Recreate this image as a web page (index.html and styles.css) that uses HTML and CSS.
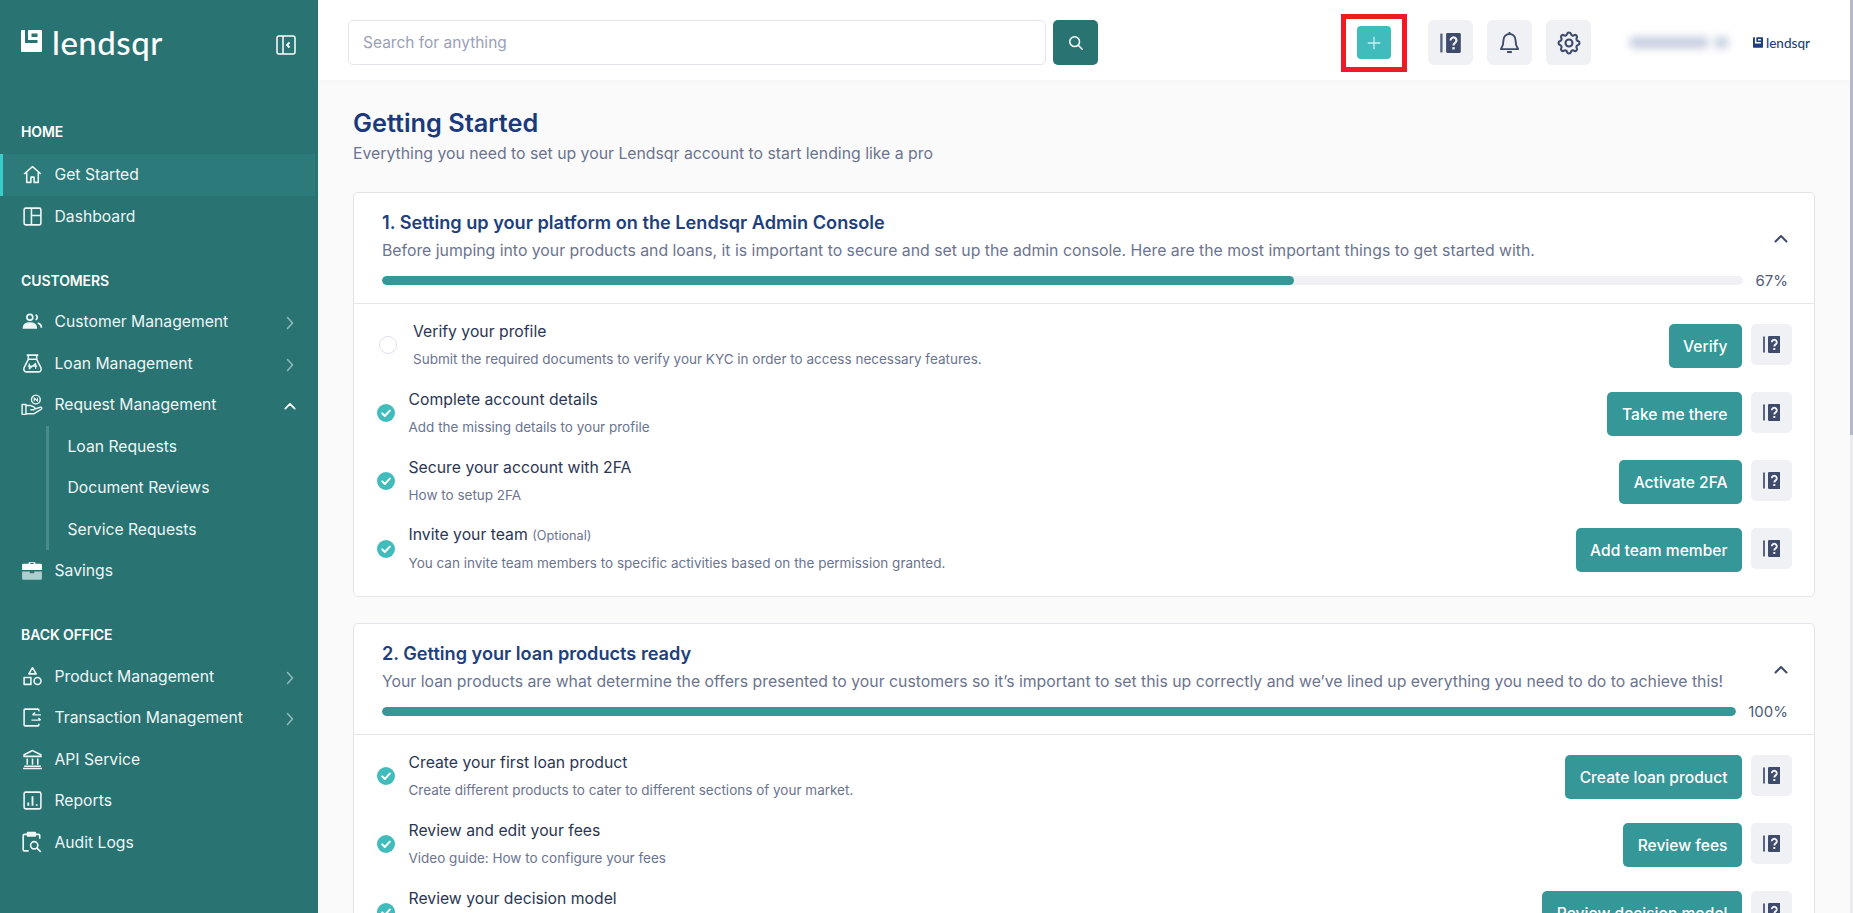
FILE: index.html
```html
<!DOCTYPE html>
<html lang="en">
<head>
    <meta charset="UTF-8">
    <title>Lendsqr - Getting Started</title>
    <link rel="stylesheet" href="styles.css">
</head>
<body>
<svg class="defs" width="0" height="0">
    <symbol id="logo" viewBox="0 0 21 22">
        <path fill="currentColor" fill-rule="evenodd" d="M1 0h3v13h12.500v-3H7V1a1 1 0 0 1 1-1h12a1 1 0 0 1 1 1v20a1 1 0 0 1-1 1H1a1 1 0 0 1-1-1V1a1 1 0 0 1 1-1zM10.500 3.500V7h6V3.500z"/>
    </symbol>
    <symbol id="help" viewBox="0 0 17.500 17">
        <rect x="0" y="0.500" width="2" height="16" fill="currentColor" opacity=".85"/>
        <rect x="5" y="0" width="12.500" height="17" rx="1.200" fill="currentColor"/>
        <path d="M8.800 6.300a2.500 2.500 0 1 1 3.800 2.100c-.9.600-1.300 1-1.300 2.200" fill="none" stroke="#f0f1f4" stroke-width="1.900"/>
        <rect x="10.300" y="12" width="2" height="2" fill="#f0f1f4"/>
    </symbol>
    <symbol id="check" viewBox="0 0 18 18">
        <circle cx="9" cy="9" r="9" fill="#40bcbc"/>
        <path d="M5.200 9.400l2.600 2.600 5-5.400" fill="none" stroke="#fff" stroke-width="2" stroke-linecap="round" stroke-linejoin="round"/>
    </symbol>
    <symbol id="chev-up" viewBox="0 0 14 9">
        <path d="M1.500 7.500L7 2l5.500 5.500" fill="none" stroke="currentColor" stroke-width="2" stroke-linecap="round" stroke-linejoin="round"/>
    </symbol>
    <symbol id="chev-right" viewBox="0 0 8 14">
        <path d="M1.500 1.500L6.500 7l-5 5.500" fill="none" stroke="currentColor" stroke-width="1.600" stroke-linecap="round" stroke-linejoin="round"/>
    </symbol>
</svg>

<div class="app">
    <aside class="sidebar">
        <div class="brand">
            <svg class="brand-mark"><use href="#logo"/></svg>
            <span class="brand-name">lendsqr</span>
            <svg class="collapse" viewBox="0 0 20 20" fill="none" stroke="#fff" stroke-width="1.500"><rect x="1" y="1" width="18" height="18" rx="2"/><path d="M7 1v18"/><path d="M13.500 7.500L11 10l2.500 2.500" stroke-width="1.800"/></svg>
        </div>

        <p class="nav-label first">HOME</p>
        <a class="nav-item current">
            <svg class="nav-icon" viewBox="0 0 20 20" fill="none" stroke="currentColor" stroke-width="1.500" stroke-linejoin="round"><path d="M2 9.500L10 2.500l8 7M4.500 8v9.500h4v-5h3v5h4V8"/></svg>
            <span>Get Started</span>
        </a>
        <a class="nav-item">
            <svg class="nav-icon" viewBox="0 0 20 20" fill="none" stroke="currentColor" stroke-width="1.500"><rect x="2" y="2" width="16" height="16" rx="1.500"/><path d="M9 2v16M9 9h9"/></svg>
            <span>Dashboard</span>
        </a>

        <p class="nav-label">CUSTOMERS</p>
        <a class="nav-item">
            <svg class="nav-icon" viewBox="0 0 20 20" fill="none" stroke="currentColor" stroke-width="1.700"><circle cx="7.500" cy="6" r="2.800"/><path d="M1.500 16c0-3 2.500-4.500 6-4.500s6 1.500 6 4.500z" fill="currentColor"/><path d="M13 3.500a2.800 2.800 0 0 1 0 5M15 11.500c2 .5 3.500 2 3.500 4.500"/></svg>
            <span>Customer Management</span>
            <svg class="nav-chev"><use href="#chev-right"/></svg>
        </a>
        <a class="nav-item">
            <svg class="nav-icon" viewBox="0 0 20 20" fill="none" stroke="currentColor" stroke-width="1.500" stroke-linejoin="round"><path d="M4.500 2h11M6 2v4l-4 8c-.8 2 .3 4 2 4h12c1.700 0 2.800-2 2-4l-4-8V2M6 6h8"/><path d="M5.500 12.500h9M7 10v5l6-5v5" stroke-width="1.200"/></svg>
            <span>Loan Management</span>
            <svg class="nav-chev"><use href="#chev-right"/></svg>
        </a>
        <a class="nav-item">
            <svg class="nav-icon wide" viewBox="0 0 20 20" fill="none" stroke="currentColor" stroke-width="1.300" stroke-linejoin="round"><rect x="1" y="9.500" width="3.500" height="9"/><path d="M4.500 10.500h4.500l3 1.500a1.200 1.200 0 0 1-.5 2.300H8.500M11.500 14l6-2c1.300-.3 2 1.200.8 1.900L11.500 18H4.500"/><circle cx="13.500" cy="5" r="4"/><path d="M12 6.500v-3l3 3v-3" stroke-width="1"/></svg>
            <span>Request Management</span>
            <svg class="nav-chev up"><use href="#chev-up"/></svg>
        </a>
        <div class="subnav">
            <a class="sub-item">Loan Requests</a>
            <a class="sub-item">Document Reviews</a>
            <a class="sub-item">Service Requests</a>
        </div>
        <a class="nav-item">
            <svg class="nav-icon wide" viewBox="0 0 20 20"><path d="M7 3.500V2h6v1.500h5a1 1 0 0 1 1 1V9H1V4.500a1 1 0 0 1 1-1zM8.500 2.800v.8h3v-.8z" fill="#fff"/><path d="M1 10.500h7V12h4v-1.500h7V17a1 1 0 0 1-1 1H2a1 1 0 0 1-1-1z" fill="#a9cfcf"/></svg>
            <span>Savings</span>
        </a>

        <p class="nav-label">BACK OFFICE</p>
        <a class="nav-item">
            <svg class="nav-icon" viewBox="0 0 20 20" fill="none" stroke="currentColor" stroke-width="1.500" stroke-linejoin="round"><path d="M10 1.500l3.500 6h-7z"/><rect x="2" y="11" width="6.500" height="6.500"/><circle cx="14.800" cy="14.300" r="3.300"/></svg>
            <span>Product Management</span>
            <svg class="nav-chev"><use href="#chev-right"/></svg>
        </a>
        <a class="nav-item">
            <svg class="nav-icon" viewBox="0 0 20 20" fill="none" stroke="currentColor" stroke-width="1.500" stroke-linejoin="round"><path d="M16 4V2.800A.800.800 0 0 0 15.200 2H3a1 1 0 0 0-1 1v14a1 1 0 0 0 1 1h12.200a.800.800 0 0 0 .8-.8V16"/><path d="M10 7.500h8M12.500 5.300L10 7.500M9 12.500h8.500M15.500 10.500l2.300 2" stroke-width="1.400"/></svg>
            <span>Transaction Management</span>
            <svg class="nav-chev"><use href="#chev-right"/></svg>
        </a>
        <a class="nav-item">
            <svg class="nav-icon" viewBox="0 0 20 20" fill="none" stroke="currentColor" stroke-width="1.500"><path d="M10 1.500L2 5.500v1.500h16V5.500z"/><path d="M5 9v6M10 9v6M15 9v6M1 18.500h18M2 16.500h16"/></svg>
            <span>API Service</span>
        </a>
        <a class="nav-item">
            <svg class="nav-icon" viewBox="0 0 20 20" fill="none" stroke="currentColor" stroke-width="1.500"><rect x="2" y="2" width="16" height="16" rx="1.500"/><path d="M6 15v-3M10 15V6M14 15v-1.500" stroke-width="1.800"/></svg>
            <span>Reports</span>
        </a>
        <a class="nav-item">
            <svg class="nav-icon wide" viewBox="0 0 20 20" fill="none" stroke="currentColor" stroke-width="1.500" stroke-linejoin="round"><path d="M6 3H3a1 1 0 0 0-1 1v13a1 1 0 0 0 1 1h4M13 3h3a1 1 0 0 1 1 1v3"/><rect x="6" y="1.500" width="7" height="3" fill="currentColor"/><circle cx="12" cy="13" r="3.300"/><path d="M14.500 15.500L18 19"/></svg>
            <span>Audit Logs</span>
        </a>
    </aside>

    <div class="main">
        <header class="topbar">
            <div class="search">
                <div class="search-input">Search for anything</div>
                <button class="search-btn">
                    <svg viewBox="0 0 18 18" width="16" height="16" fill="none" stroke="#fff" stroke-width="1.700" stroke-linecap="round"><circle cx="7.500" cy="7.500" r="5.500"/><path d="M11.800 11.800L16 16"/></svg>
                </button>
            </div>
            <div class="top-actions">
                <div class="add-wrap">
                    <button class="add-btn">
                        <svg viewBox="0 0 18 18" width="16" height="16" stroke="#cdeeee" stroke-width="1.500"><path d="M9 2v14M2 9h14"/></svg>
                    </button>
                </div>
                <button class="icon-btn"><svg class="ic-help"><use href="#help"/></svg></button>
                <button class="icon-btn">
                    <svg viewBox="0 0 20 24" width="19" height="23" fill="none" stroke="#3e4b6b" stroke-width="2" stroke-linejoin="round"><path d="M10 3a6.300 6.300 0 0 0-6.300 6.300c0 4.500-.9 7-2.700 9.700h18c-1.800-2.700-2.700-5.200-2.700-9.700A6.300 6.300 0 0 0 10 3zM10 3V1"/><path d="M7.500 22h5" stroke-width="2.200"/></svg>
                </button>
                <button class="icon-btn">
                    <svg viewBox="0 0 24 24" width="28" height="28" fill="none" stroke="#3e4b6b" stroke-width="1.800"><path d="M10.325 4.317c.426-1.756 2.924-1.756 3.350 0a1.724 1.724 0 0 0 2.573 1.066c1.543-.94 3.310.826 2.370 2.370a1.724 1.724 0 0 0 1.065 2.572c1.756.426 1.756 2.924 0 3.350a1.724 1.724 0 0 0-1.066 2.573c.94 1.543-.826 3.310-2.370 2.370a1.724 1.724 0 0 0-2.572 1.065c-.426 1.756-2.924 1.756-3.350 0a1.724 1.724 0 0 0-2.573-1.066c-1.543.94-3.310-.826-2.370-2.370a1.724 1.724 0 0 0-1.065-2.572c-1.756-.426-1.756-2.924 0-3.350a1.724 1.724 0 0 0 1.066-2.573c-.94-1.543.826-3.310 2.370-2.370c1 .608 2.296.07 2.572-1.065z"/><circle cx="12" cy="12" r="3"/></svg>
                </button>
                <div class="user-blur"><span></span><span></span></div>
                <div class="org-logo">
                    <svg class="org-mark"><use href="#logo"/></svg>
                    <span>lendsqr</span>
                </div>
            </div>
        </header>

        <main class="content">
            <h1 class="page-title">Getting Started</h1>
            <p class="page-sub">Everything you need to set up your Lendsqr account to start lending like a pro</p>

            <section class="card">
                <div class="card-head">
                    <h2>1. Setting up your platform on the Lendsqr Admin Console</h2>
                    <p>Before jumping into your products and loans, it is important to secure and set up the admin console. Here are the most important things to get started with.</p>
                    <svg class="card-chev"><use href="#chev-up"/></svg>
                    <div class="progress-row">
                        <div class="track"><div class="fill" style="width:67%"></div></div>
                        <span class="pct">67%</span>
                    </div>
                </div>
                <div class="card-body">
                    <div class="task">
                        <span class="circle"></span>
                        <div class="task-text pending">
                            <h3>Verify your profile</h3>
                            <p>Submit the required documents to verify your KYC in order to access necessary features.</p>
                        </div>
                        <button class="btn">Verify</button>
                        <button class="help-btn"><svg class="ic-help small"><use href="#help"/></svg></button>
                    </div>
                    <div class="task">
                        <svg class="tick"><use href="#check"/></svg>
                        <div class="task-text">
                            <h3>Complete account details</h3>
                            <p>Add the missing details to your profile</p>
                        </div>
                        <button class="btn">Take me there</button>
                        <button class="help-btn"><svg class="ic-help small"><use href="#help"/></svg></button>
                    </div>
                    <div class="task">
                        <svg class="tick"><use href="#check"/></svg>
                        <div class="task-text">
                            <h3>Secure your account with 2FA</h3>
                            <p>How to setup 2FA</p>
                        </div>
                        <button class="btn">Activate 2FA</button>
                        <button class="help-btn"><svg class="ic-help small"><use href="#help"/></svg></button>
                    </div>
                    <div class="task">
                        <svg class="tick"><use href="#check"/></svg>
                        <div class="task-text">
                            <h3>Invite your team <small>(Optional)</small></h3>
                            <p>You can invite team members to specific activities based on the permission granted.</p>
                        </div>
                        <button class="btn">Add team member</button>
                        <button class="help-btn"><svg class="ic-help small"><use href="#help"/></svg></button>
                    </div>
                </div>
            </section>

            <section class="card">
                <div class="card-head">
                    <h2>2. Getting your loan products ready</h2>
                    <p>Your loan products are what determine the offers presented to your customers so it’s important to set this up correctly and we’ve lined up everything you need to do to achieve this!</p>
                    <svg class="card-chev"><use href="#chev-up"/></svg>
                    <div class="progress-row">
                        <div class="track"><div class="fill" style="width:100%"></div></div>
                        <span class="pct">100%</span>
                    </div>
                </div>
                <div class="card-body">
                    <div class="task">
                        <svg class="tick"><use href="#check"/></svg>
                        <div class="task-text">
                            <h3>Create your first loan product</h3>
                            <p>Create different products to cater to different sections of your market.</p>
                        </div>
                        <button class="btn">Create loan product</button>
                        <button class="help-btn"><svg class="ic-help small"><use href="#help"/></svg></button>
                    </div>
                    <div class="task">
                        <svg class="tick"><use href="#check"/></svg>
                        <div class="task-text">
                            <h3>Review and edit your fees</h3>
                            <p>Video guide: How to configure your fees</p>
                        </div>
                        <button class="btn">Review fees</button>
                        <button class="help-btn"><svg class="ic-help small"><use href="#help"/></svg></button>
                    </div>
                    <div class="task">
                        <svg class="tick"><use href="#check"/></svg>
                        <div class="task-text">
                            <h3>Review your decision model</h3>
                            <p>&nbsp;</p>
                        </div>
                        <button class="btn">Review decision model</button>
                        <button class="help-btn"><svg class="ic-help small"><use href="#help"/></svg></button>
                    </div>
                </div>
            </section>
        </main>
        <div class="scroll-track"><div class="scroll-thumb"></div></div>
    </div>
</div>
</body>
</html>
```

FILE: styles.css
```css
*{padding:0;margin:0;box-sizing:border-box;}
html,body{height:100%;overflow:hidden;}
body{font-family:Inter,"Noto Sans",sans-serif;color:#213f7d;background:#fafafa;}
button{border:none;font-family:inherit;cursor:pointer;}
.defs{position:absolute;}
.app{display:flex;height:913px;}

/* sidebar */
.sidebar{width:318px;flex:none;background:#297373;color:#fff;overflow:hidden;}
.brand{display:flex;align-items:center;height:88px;padding:0 22px 0 21px;}
.brand-mark{width:21px;height:22px;margin:-6px 10px 0 0;color:#fff;}
.brand-name{font-family:Lato,sans-serif;font-size:33px;font-weight:500;line-height:40px;margin-top:-5px;letter-spacing:.5px;}
.collapse{width:20px;height:20px;margin:2px 0 0 auto;}

.nav-label{font-size:14px;font-weight:600;line-height:20px;height:20px;padding-left:21px;margin:33.5px 0 10.5px;letter-spacing:-.1px;}
.nav-label.first{margin:34px 0 12px;}
.nav-item{display:flex;align-items:center;height:41.5px;padding-left:21.5px;font-size:15.7px;color:#eef6f6;}
.nav-item.current{background:#2c7a7a;box-shadow:inset 3px 0 0 #39cdcc;margin-right:3px;}
.nav-icon{width:21px;height:21px;flex:none;margin-right:12px;}
.nav-icon.wide{width:22px;height:22px;margin:0 11.5px 0 -.5px;}
.nav-chev{width:8px;height:14px;margin:3px 24px 0 auto;color:#8fb9b9;}
.nav-chev.up{width:12px;height:8px;color:#fff;margin-right:22px;}
.subnav{margin-left:46px;border-left:3px solid #4a8a8a;padding-left:18.5px;}
.sub-item{display:flex;align-items:center;height:41.5px;font-size:15.7px;color:#eef6f6;}

/* top bar */
.main{flex:1;min-width:0;position:relative;}
.topbar{display:flex;align-items:center;justify-content:space-between;height:80px;background:#fff;padding:5px 42px 0 30px;box-shadow:0 2px 6px rgba(0,0,0,.02);}
.search{display:flex;gap:7px;}
.search-input{width:698px;height:45px;border:1px solid #e4e5ec;border-radius:5px;padding-left:14px;font-size:15.5px;line-height:43px;color:#9aa1b7;background:#fff;}
.search-btn{width:45px;height:45px;border-radius:5px;background:#297373;display:flex;align-items:center;justify-content:center;}
.top-actions{display:flex;align-items:center;}
.add-wrap{width:66px;height:58px;border:5px solid #ed1c24;display:flex;align-items:center;justify-content:center;margin-right:21px;}
.add-btn{width:34px;height:33px;border-radius:4px;background:#40bcbc;display:flex;align-items:center;justify-content:center;}
.icon-btn{width:45px;height:45px;border-radius:6px;background:#f0f1f4;margin-right:14px;display:flex;align-items:center;justify-content:center;}
.ic-help{width:21px;height:20px;color:#3e4b6b;}
.ic-help.small{width:17.5px;height:17px;}
.user-blur{width:108px;height:42px;margin:0 16px 0 24px;display:flex;align-items:center;gap:7px;filter:blur(4px);padding-left:1px;}
.user-blur span{display:block;height:11px;width:78px;background:#c3cbde;}
.user-blur span+span{width:13px;}
.org-logo{display:flex;align-items:center;gap:3px;width:58px;color:#213f7d;font-family:Lato,sans-serif;font-size:13.5px;font-weight:500;}
.org-mark{width:10px;height:11px;flex:none;}

/* page content */
.content{padding:28px 38px 0 35px;height:833px;overflow:hidden;}
.page-title{font-size:25.3px;font-weight:600;line-height:30px;color:#1b3a7e;}
.page-sub{font-size:15.8px;line-height:22px;margin-top:5px;color:#6b7490;}
.card{background:#fff;border:1px solid #e3e4e8;border-radius:5px;margin-bottom:26px;}
.card:first-of-type{margin-top:27px;}
.card-head{position:relative;padding:17px 26px 0 28px;height:111px;border-bottom:1px solid #e5e6ea;}
.card-head h2{font-size:18.15px;font-weight:600;line-height:24px;color:#213f7d;}
.card-head p{font-size:15.8px;line-height:22px;margin-top:6px;color:#6b7490;white-space:nowrap;}
.card-chev{position:absolute;top:41px;right:26px;width:14px;height:9px;color:#3e4b6b;}
.progress-row{display:flex;align-items:center;height:18px;margin-top:9.5px;}
.track{flex:1;height:9px;border-radius:5px;background:#f0f1f4;overflow:hidden;}
.fill{height:100%;border-radius:5px;background:#359797;}
.pct{margin-left:12px;font-size:15px;color:#4f5b78;}

.card-body{padding:20px 22px 24px 0;}
.task{display:flex;align-items:center;height:44px;margin-bottom:24px;}
.task:last-child{margin-bottom:0;}
.circle{width:18px;height:18px;border:1px solid #dfe0ea;border-radius:50%;margin:-2px 0 0 25px;flex:none;}
.tick{width:18px;height:18px;margin:-2px 0 0 23px;flex:none;}
.task-text{flex:1;margin-left:13.5px;padding-bottom:3px;}
.task-text.pending{margin-left:16px;}
.task-text h3{font-size:15.75px;font-weight:400;line-height:20px;color:#2a3654;}
.task-text h3 small{font-size:12.7px;color:#6b7490;}
.task-text p{font-size:13.5px;line-height:18px;margin-top:8px;color:#6b7490;}
.btn{height:44px;padding:0 14.5px;border-radius:5px;background:#359797;color:#fff;font-size:15.6px;font-weight:500;}
.help-btn{width:41px;height:41px;margin-left:9px;border-radius:5px;background:#f0f1f4;display:flex;align-items:center;justify-content:center;align-self:flex-start;}

.scroll-track{position:absolute;top:0;right:0;width:3px;height:100%;background:#ebebed;}
.scroll-thumb{height:435px;background:#b3b8ca;}
```
